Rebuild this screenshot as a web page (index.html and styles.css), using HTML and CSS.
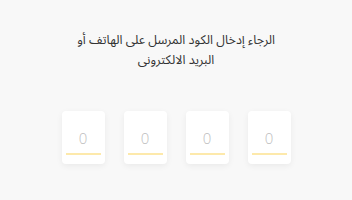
FILE: index.html
```html
<!DOCTYPE html>
<html lang="ar">
<head>
    <meta charset="UTF-8">
    <meta name="viewport" content="width=device-width, initial-scale=1.0">
    <title>التحقق من الكود</title>
    <link rel="stylesheet" href="styles.css">
</head>
<body>
    <div class="verify">
        <p class="verify-text" dir="rtl">الرجاء إدخال الكود المرسل على الهاتف أو<br>البريد الالكترونى</p>

        <div class="code-row">
            <div class="code-box"><input class="code-input" type="text" maxlength="1" placeholder="0"></div>
            <div class="code-box"><input class="code-input" type="text" maxlength="1" placeholder="0"></div>
            <div class="code-box"><input class="code-input" type="text" maxlength="1" placeholder="0"></div>
            <div class="code-box"><input class="code-input" type="text" maxlength="1" placeholder="0"></div>
        </div>
    </div>
</body>
</html>
```

FILE: styles.css
```css
:root {
    --bg-color: #f8f8f8;
    --text-color: #333333;
    --line-color: #fde9ab;
    --hint-color: #bdbdbd;
}

* {
    box-sizing: border-box;
    margin: 0;
    padding: 0;
}

body {
    background: var(--bg-color);
    font-family: 'Noto Sans Arabic', 'DejaVu Sans', sans-serif;
    min-height: 100vh;
}

.verify {
    display: flex;
    flex-direction: column;
    align-items: center;
    padding-top: 30px;
}

.verify-text {
    color: var(--text-color);
    font-size: 12.5px;
    line-height: 20px;
    text-align: center;
}

.code-row {
    display: flex;
    gap: 19px;
    margin-top: 41px;
}

.code-box {
    width: 43px;
    height: 53px;
    background: white;
    border-radius: 4px;
    box-shadow: 0 2px 6px rgba(0,0,0,0.06);
    display: flex;
    align-items: flex-end;
    padding: 0 4px 9px;
}

.code-input {
    width: 100%;
    height: 26px;
    border: none;
    border-bottom: 2px solid var(--line-color);
    background: transparent;
    outline: none;
    text-align: center;
    font-family: 'Open Sans', sans-serif;
    font-weight: 300;
    font-size: 15px;
    padding-bottom: 7px;
    color: var(--text-color);
}

.code-input::placeholder {
    color: var(--hint-color);
}
```
